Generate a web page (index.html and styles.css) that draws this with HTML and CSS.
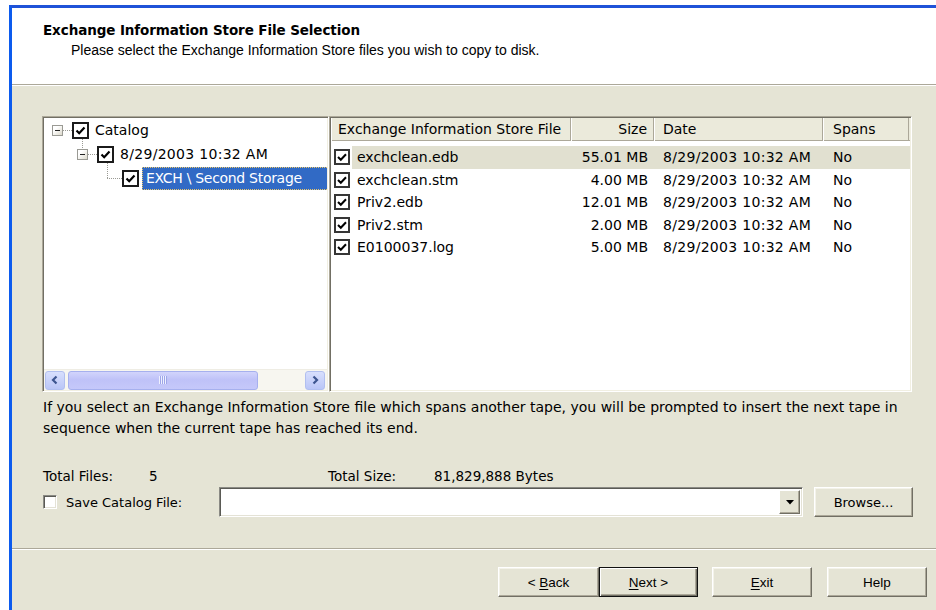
FILE: index.html
```html
<!DOCTYPE html>
<html lang="en">
<head>
<meta charset="utf-8">
<title>Exchange Information Store File Selection</title>
<link rel="stylesheet" href="styles.css">
</head>
<body>
<div class="window">
  <header class="head">
    <h1 class="title">Exchange Information Store File Selection</h1>
    <p class="subtitle">Please select the Exchange Information Store files you wish to copy to disk.</p>
  </header>

  <main class="content">
    <div class="panes">
      <div class="tree sunken">
        <div class="tree-body">
          <div class="node lvl0">
            <span class="exp"><span class="pm"></span></span>
            <span class="cb tcb"><svg viewBox="0 0 13 13" width="13" height="13"><path d="M2.5 6.5 L5.2 9.2 L10.5 3.5" fill="none" stroke="#000" stroke-width="2.2"/></svg></span>
            <span class="lbl">Catalog</span>
          </div>
          <div class="node lvl1">
            <span class="exp"><span class="pm"></span></span>
            <span class="cb tcb"><svg viewBox="0 0 13 13" width="13" height="13"><path d="M2.5 6.5 L5.2 9.2 L10.5 3.5" fill="none" stroke="#000" stroke-width="2.2"/></svg></span>
            <span class="lbl date">8/29/2003 10:32 AM</span>
          </div>
          <div class="node lvl2">
            <span class="exp"></span>
            <span class="cb tcb"><svg viewBox="0 0 13 13" width="13" height="13"><path d="M2.5 6.5 L5.2 9.2 L10.5 3.5" fill="none" stroke="#000" stroke-width="2.2"/></svg></span>
            <span class="lbl sel">EXCH \ Second Storage</span>
          </div>
        </div>
        <div class="hscroll">
          <span class="sb-btn"><svg viewBox="0 0 10 10" width="10" height="10"><path d="M6.5 1.5 L3 5 L6.5 8.5" fill="none" stroke="#3d5590" stroke-width="2.2"/></svg></span>
          <span class="thumb"><span class="grip"></span></span>
          <span class="sb-track"></span>
          <span class="sb-btn"><svg viewBox="0 0 10 10" width="10" height="10"><path d="M3.5 1.5 L7 5 L3.5 8.5" fill="none" stroke="#3d5590" stroke-width="2.2"/></svg></span>
        </div>
      </div>

      <div class="list sunken">
        <div class="list-head">
          <span class="hcell">Exchange Information Store File</span>
          <span class="hcell right">Size</span>
          <span class="hcell pad">Date</span>
          <span class="hcell pad">Spans</span>
        </div>
        <div class="rows">
          <div class="row current">
            <span class="cell chk"><span class="cb lcb"><svg viewBox="0 0 12 12" width="12" height="12"><path d="M2 6 L4.8 8.8 L10 3.2" fill="none" stroke="#000" stroke-width="2"/></svg></span></span>
            <span class="cell name">exchclean.edb</span>
            <span class="cell size">55.01 MB</span>
            <span class="cell date">8/29/2003 10:32 AM</span>
            <span class="cell spans">No</span>
          </div>
          <div class="row">
            <span class="cell chk"><span class="cb lcb"><svg viewBox="0 0 12 12" width="12" height="12"><path d="M2 6 L4.8 8.8 L10 3.2" fill="none" stroke="#000" stroke-width="2"/></svg></span></span>
            <span class="cell name">exchclean.stm</span>
            <span class="cell size">4.00 MB</span>
            <span class="cell date">8/29/2003 10:32 AM</span>
            <span class="cell spans">No</span>
          </div>
          <div class="row">
            <span class="cell chk"><span class="cb lcb"><svg viewBox="0 0 12 12" width="12" height="12"><path d="M2 6 L4.8 8.8 L10 3.2" fill="none" stroke="#000" stroke-width="2"/></svg></span></span>
            <span class="cell name">Priv2.edb</span>
            <span class="cell size">12.01 MB</span>
            <span class="cell date">8/29/2003 10:32 AM</span>
            <span class="cell spans">No</span>
          </div>
          <div class="row">
            <span class="cell chk"><span class="cb lcb"><svg viewBox="0 0 12 12" width="12" height="12"><path d="M2 6 L4.8 8.8 L10 3.2" fill="none" stroke="#000" stroke-width="2"/></svg></span></span>
            <span class="cell name">Priv2.stm</span>
            <span class="cell size">2.00 MB</span>
            <span class="cell date">8/29/2003 10:32 AM</span>
            <span class="cell spans">No</span>
          </div>
          <div class="row">
            <span class="cell chk"><span class="cb lcb"><svg viewBox="0 0 12 12" width="12" height="12"><path d="M2 6 L4.8 8.8 L10 3.2" fill="none" stroke="#000" stroke-width="2"/></svg></span></span>
            <span class="cell name">E0100037.log</span>
            <span class="cell size">5.00 MB</span>
            <span class="cell date">8/29/2003 10:32 AM</span>
            <span class="cell spans">No</span>
          </div>
        </div>
      </div>
    </div>

    <p class="note">If you select an Exchange Information Store file which spans another tape, you will be prompted to insert the next tape in sequence when the current tape has reached its end.</p>

    <div class="totals">
      <span>Total Files:</span>
      <span>5</span>
      <span>Total Size:</span>
      <span>81,829,888 Bytes</span>
    </div>

    <div class="save-row">
      <span class="plain-cb"></span>
      <span class="save-label">Save Catalog File:</span>
      <span class="combo">
        <span class="combo-field"></span>
        <span class="combo-btn"><svg viewBox="0 0 8 5" width="8" height="5"><path d="M0 0 H8 L4 4.5 Z" fill="#000"/></svg></span>
      </span>
      <button class="btn browse" type="button">Browse...</button>
    </div>
  </main>

  <footer class="buttons">
    <button class="btn wiz back" type="button">&lt; <u>B</u>ack</button>
    <button class="btn wiz next default" type="button"><u>N</u>ext &gt;</button>
    <button class="btn wiz exit" type="button"><u>E</u>xit</button>
    <button class="btn wiz help" type="button">Help</button>
  </footer>
</div>
</body>
</html>
```

FILE: styles.css
```css
* { box-sizing: border-box; }

html, body {
  margin: 0;
  height: 100%;
  background: #fff;
}

body {
  padding: 5px 0 0 9px;
  overflow: hidden;
  font-family: "Liberation Sans", Arial, sans-serif;
  font-size: 14px;
  color: #000;
}

/* wizard frame */
.window {
  height: 605px;
  display: flex;
  flex-direction: column;
  border-top: 3px solid #1f52d8;
  border-left: 3px solid #0c5bee;
  background: #e5e4d5;
}

.head {
  flex: none;
  height: 77px;
  background: #fff;
  border-bottom: 1px solid #aca899;
  padding: 14px 0 0 31px;
}

.title {
  margin: 0;
  font-family: "DejaVu Sans", Verdana, sans-serif;
  font-size: 13.5px;
  font-weight: bold;
  line-height: 17px;
  letter-spacing: -0.1px;
}

.subtitle {
  margin: 3px 0 0 28px;
  font-size: 14px;
  line-height: 17px;
}

.content {
  flex: none;
  height: 463px;
  border-top: 1px solid #fff;
  padding: 30px 24px 0 30px;
  font-family: "DejaVu Sans", Verdana, sans-serif;
}

.panes {
  display: grid;
  grid-template-columns: 287px 1fr;
  height: 276px;
}

.sunken {
  background: #fff;
  border: 1px solid;
  border-color: #aca899 #fff #fff #aca899;
  box-shadow: inset 1px 1px 0 #716f64, inset -1px -1px 0 #f1efe2;
  padding: 1px;
  overflow: hidden;
}

/* tree */
.tree {
  display: flex;
  flex-direction: column;
  font-size: 14px;
}

.tree-body {
  flex: 1;
  overflow: hidden;
}

.node {
  display: flex;
  align-items: center;
  height: 24px;
  white-space: nowrap;
}

.lvl0 { padding-left: 3px; }
.lvl1 { padding-left: 28px; }
.lvl2 { padding-left: 53px; }

.exp {
  position: relative;
  flex: none;
  width: 20px;
  height: 24px;
  display: flex;
  align-items: center;
  justify-content: center;
}

.pm {
  position: relative;
  width: 11px;
  height: 11px;
  border: 1px solid #9a9a94;
  background: linear-gradient(135deg, #fff 30%, #dcd9cc);
  z-index: 1;
}

.pm::after {
  content: "";
  position: absolute;
  left: 2px;
  right: 2px;
  top: 4px;
  height: 1px;
  background: #222;
}

/* dotted connectors */
.lvl0 .exp::after,
.lvl1 .exp::after,
.lvl2 .exp::after {
  content: "";
  position: absolute;
  top: 12px;
  left: 15px;
  width: 10px;
  border-top: 1px dotted #9a9a94;
}

.lvl2 .exp::after {
  left: 10px;
  width: 15px;
}

.lvl1 .exp::before,
.lvl2 .exp::before {
  content: "";
  position: absolute;
  left: 10px;
  top: -3px;
  height: 9px;
  border-left: 1px dotted #9a9a94;
}

.lvl2 .exp::before {
  height: 15px;
}

.cb {
  flex: none;
  display: inline-flex;
  align-items: center;
  justify-content: center;
  background: #fff;
}

.tcb {
  width: 17px;
  height: 17px;
  margin-left: 5px;
  border: 2px solid #1b1b1b;
}

.lbl {
  margin-left: 3px;
  padding: 0 3px;
  height: 23px;
  line-height: 23px;
}

.date { letter-spacing: 0.3px; }

.sel {
  flex: 1;
  padding-left: 4px;
  background: #316ac5;
  color: #fff;
  outline: 1px dotted #e9c66a;
  outline-offset: -1px;
  margin-right: -2px;
  letter-spacing: -0.3px;
}

/* horizontal scrollbar */
.hscroll {
  flex: none;
  height: 21px;
  display: flex;
  align-items: center;
  padding: 0 2px 0 1px;
  background: #f7f6f0;
  border-top: 1px solid #efede4;
}

.sb-btn {
  flex: none;
  width: 20px;
  height: 19px;
  display: flex;
  align-items: center;
  justify-content: center;
  border: 1px solid #b1bff0;
  border-radius: 3px;
  background: linear-gradient(#d8dffd, #bac6f7);
}

.thumb {
  flex: none;
  width: 190px;
  height: 19px;
  margin-left: 3px;
  display: flex;
  align-items: center;
  justify-content: center;
  border: 1px solid #a6b0ee;
  border-radius: 3px;
  background: linear-gradient(#d2d4fc, #bfc2f8 45%, #c5c8fa);
}

.grip {
  width: 8px;
  height: 8px;
  background: repeating-linear-gradient(to right, #eef0ff 0 1px, #9ea6e8 1px 2px);
}

.sb-track { flex: 1; }

/* file list */
.list {
  font-size: 14px;
}

.list-head {
  display: grid;
  grid-template-columns: 240px 83px 169px 86px;
  height: 23px;
  background: #ebeadb;
  border-bottom: 1px solid #aca899;
  box-shadow: 0 1px 0 #fff;
}

.hcell {
  line-height: 23px;
  padding-left: 7px;
  border-right: 1px solid #aca899;
  box-shadow: inset 1px 0 0 #fff;
  white-space: nowrap;
}

.hcell.right {
  text-align: right;
  padding: 0 6px 0 0;
}

.hcell.pad { padding-left: 9px; }
.hcell:last-child { padding-left: 10px; }

.rows { padding-top: 5px; }

.row {
  display: grid;
  grid-template-columns: 21px 219px 83px 169px 86px;
  height: 22.5px;
  align-items: center;
  white-space: nowrap;
}

.row.current {
  background: linear-gradient(to right, transparent 21px, #e1e0d0 21px);
}

.cell.chk { padding-left: 3px; display: flex; }

.lcb {
  width: 16px;
  height: 16px;
  border: 2px solid #363636;
}

.cell.name { padding-left: 5px; }
.cell.size { text-align: right; padding-right: 6px; }
.cell.date { padding-left: 9px; }
.cell.spans { padding-left: 10px; }

/* lower area */
.note {
  margin: 5px 0 0 1px;
  line-height: 21px;
  font-size: 14px;
}

.totals {
  display: grid;
  grid-template-columns: 106px 179px 106px auto;
  margin: 27px 0 0 1px;
  line-height: 21px;
  font-size: 13.5px;
}

.save-row {
  display: flex;
  align-items: center;
  height: 30px;
  padding-left: 1px;
}

.plain-cb {
  flex: none;
  width: 14px;
  height: 14px;
  background: #fff;
  border: 1px solid;
  border-color: #8a8a84 #fff #fff #8a8a84;
  box-shadow: inset 1px 1px 0 #5a5a55, inset -1px -1px 0 #e4e2d6;
}

.save-label {
  flex: none;
  width: 153px;
  margin-left: 9px;
  font-size: 13px;
}

.combo {
  flex: none;
  width: 584px;
  height: 30px;
  display: flex;
  align-items: center;
  padding: 2px;
  background: #fff;
  border: 1px solid;
  border-color: #8a8a84 #fff #fff #8a8a84;
  box-shadow: inset 1px 1px 0 #5a5a55, inset -1px -1px 0 #e4e2d6;
}

.combo-field { flex: 1; }

.combo-btn {
  flex: none;
  width: 21px;
  height: 24px;
  display: flex;
  align-items: center;
  justify-content: center;
  background: #e5e4d5;
  border: 1px solid;
  border-color: #fff #716f64 #716f64 #fff;
  box-shadow: inset -1px -1px 0 #aca899;
}

.btn {
  flex: none;
  height: 30px;
  padding: 0;
  background: #e5e4d5;
  color: #000;
  border: 1px solid;
  border-color: #fff #716f64 #716f64 #fff;
  box-shadow: inset -1px -1px 0 #aca899, inset 1px 1px 0 #f4f3ea;
  font-family: "Liberation Sans", Arial, sans-serif;
  font-size: 13.5px;
}

.browse {
  width: 99px;
  margin-left: 11px;
  font-family: "DejaVu Sans", Verdana, sans-serif;
  font-size: 13px;
}

/* wizard buttons */
.buttons {
  flex: 1;
  display: flex;
  justify-content: flex-end;
  align-items: flex-start;
  border-top: 1px solid #aca899;
  box-shadow: inset 0 1px 0 #fff;
  padding: 18px 9px 0 0;
}

.wiz { width: 100px; }
.back { width: 101px; }
.next { width: 99px; }
.exit { margin-left: 14px; }
.help { margin-left: 15px; }

.default {
  border: 1px solid #111;
  box-shadow: inset 1px 1px 0 #fff, inset -1px -1px 0 #716f64, inset -2px -2px 0 #aca899;
}

.wiz u { text-underline-offset: 2px; }
```
